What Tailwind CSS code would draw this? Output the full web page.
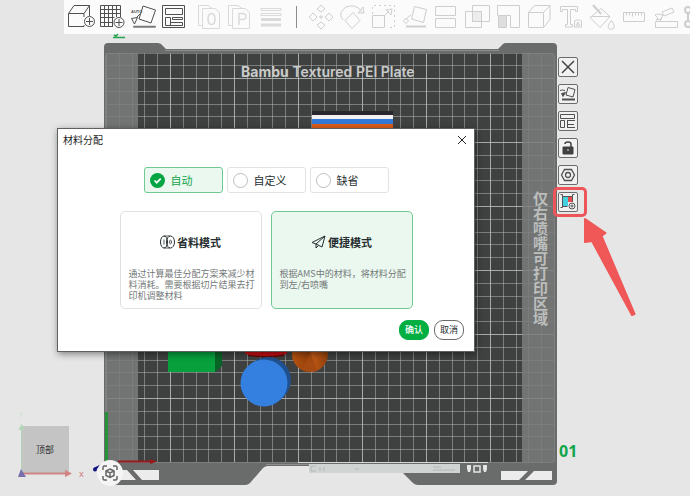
<!DOCTYPE html>
<html lang="zh-CN">
<head>
<meta charset="utf-8">
<meta name="viewport" content="width=device-width, initial-scale=1">
<title>材料分配</title>
<script src="https://cdn.jsdelivr.net/npm/@tailwindcss/browser@4"></script>
</head>
<body class="bg-[#e6e6e6] font-['Noto_Sans_CJK_SC',sans-serif] text-[#262e30]">
<main class="relative min-h-screen overflow-hidden">

  <!-- Build plate and models -->
  <svg class="absolute left-0 top-0" width="690" height="496" viewBox="0 0 690 496" role="img" aria-label="打印板">
    <defs>
      <pattern id="grid" x="106" y="78" width="64" height="64" patternUnits="userSpaceOnUse">
        <path d="M0 13.500H64M0 26.500H64M0 38.500H64M0 51.500H64M13.500 0V64M26.500 0V64M38.500 0V64M51.500 0V64" stroke="#b5bab8" stroke-opacity=".5"/>
        <path d="M0 .5H64M.5 0V64" stroke="#c8cdcb" stroke-opacity=".75"/>
      </pattern>
      <linearGradient id="cone"><stop offset="0" stop-color="#b9520f"/><stop offset=".5" stop-color="#8f3f0c"/><stop offset=".55" stop-color="#c35a16"/><stop offset="1" stop-color="#8e3e0b"/></linearGradient>
    </defs>
    <path d="M104 47q0-4 4-4h50q3 0 5 3l3 3h332l5-5q1-1 3-1h47q4 0 4 4v434q0 4-4 4H418q-3 0-5-2l-10-10H309v-7h-41q-3 0-5 2l-13 15q-2 2-5 2H108q-4 0-4-4z" fill="#6a6c6b"/>
    <path d="M165 50.500H499" stroke="#8b908e"/>
    <path d="M106 53h32v409h-32zM522 53h32v409h-32z" fill="#727473"/>
    <rect x="138" y="53" width="384" height="409" fill="#3f4140"/>
    <rect x="138" y="53" width="384" height="409" fill="url(#grid)"/>
    <g opacity=".25"><rect x="106" y="53" width="32" height="409" fill="url(#grid)"/><rect x="522" y="53" width="32" height="409" fill="url(#grid)"/></g>
    <rect x="105.500" y="53.500" width="449" height="409" rx="3" fill="none" stroke="#858886" stroke-opacity=".7"/>
    <path d="M266 464.500H404" stroke="#8c8f8d"/>
    <path d="M298 462.500H488" stroke="#d4d8d6"/>
    <rect x="309" y="464" width="151" height="9" fill="#d0d5d3"/>
    <path d="M316 466h-5v5h5M320 467v4M324 467v4M355 469h4M433 467h8M433 470h22" stroke="#b4bab7" fill="none"/>
    <path d="M467 465h4v4l-1 3h-2l-1-3zM483 465h4v4l-1 3h-2l-1-3z" fill="#e4e6e5"/>
    <rect x="474" y="466" width="6" height="6" fill="none" stroke="#e4e6e5" stroke-width="1.500"/>
    <path d="M119 470h8l9 10h-17zM133 470h26v10h-17zM501 471h27l-9 9h-18zM534 471h18v9h-27z" fill="#ececec"/>
    <text x="241" y="77" font-family="Inter, sans-serif" font-size="14" font-weight="600" fill="#c9cbca"><tspan font-weight="700">Bambu</tspan> Textured PEI Plate</text>

    <path d="M312 111h81v5h-81z" fill="#29262d"/><path d="M312 115h81v5h-81z" fill="#f0f0f3"/>
    <path d="M312 119h81v5h-81z" fill="#3278d8"/><path d="M312 124h81v6h-81z" fill="#dc5c1a"/>
    <path d="M215 345h7v21l-7 6z" fill="#076426"/><path d="M168 345h47v27h-47z" fill="#07a03d"/>
    <path d="M248 354q18 3 36 0v2q-18 3-36 0z" fill="#650a0d"/><path d="M245 345h42v9q-21 4-42 0z" fill="#c90d12"/>
    <circle cx="268" cy="380" r="23" fill="#20518f"/><circle cx="264" cy="383" r="23.500" fill="#3480e0"/>
    <circle cx="310" cy="354" r="18" fill="url(#cone)"/><path d="M310 352l-8 18q8 3 15 0z" fill="#a54a10"/>

    <path d="M106.500 412V462" stroke="#28923a" stroke-width="3"/>
    <path d="M118 461.500H152" stroke="#96191c" stroke-width="2"/><path d="M150 459l7 2.500-7 2.500z" fill="#96191c"/>
    <path d="M94 469l8-4" stroke="#11117f" stroke-width="2"/><circle cx="95" cy="469.500" r="2" fill="#11117f"/>

    <rect x="21" y="426" width="48" height="47" fill="#c4c4c4"/>
    <path d="M21.500 428V473" stroke="#b5d2ba"/><path d="M18.500 430l3-6 3 6z" fill="#b0d8b8"/>
    <path d="M19 412l2 3 2-3M21 415v3" stroke="#cfe3d2" fill="none"/>
    <path d="M22 473.500H66" stroke="#cf8583" stroke-width="2"/><path d="M65 470l7 3.500-7 3.500z" fill="#d18481"/>
    <path d="M18 477l3-8 5 8z" fill="#766fad"/>
  </svg>
  <span class="absolute left-9 top-[443px] text-[9px] leading-[14px] text-[#333]">顶部</span>
  <span class="absolute left-[79px] top-[468px] font-['Noto_Sans',sans-serif] text-[9px] leading-[12px] text-[#cf7b79]">x</span>
  <span class="absolute left-[532px] top-[191px] font-bold text-[15px] leading-[16px] text-[#bcbebd] [writing-mode:vertical-rl]">仅右喷嘴可打印区域</span>
  <span class="absolute left-[559px] top-[440px] font-['Noto_Sans',sans-serif] text-base leading-[22px] font-bold text-[#12a54a]">01</span>
  <button type="button" aria-label="适应视图" class="absolute left-[97px] top-[460px] size-[26px] rounded-full bg-[#f5f5f5]">
    <svg class="size-full" viewBox="0 0 26 26" fill="none" stroke="#666" stroke-width="1.500"><path d="M6 10V7l1-1h3M16 6h3l1 1v3M20 16v3l-1 1h-3M10 20H7l-1-1v-3M13 9l4 2v4.500l-4 2-4-2V11zM9 11l4 2 4-2M13 13v4"/></svg>
  </button>

  <!-- Toolbar -->
  <header class="relative ml-16 flex h-[34px] overflow-hidden bg-[#fbfbfb] pl-0.5 [&_button]:w-[31px] [&_button]:shrink-0 [&_svg]:h-[34px] [&_svg]:w-[31px]">
    <div class="flex shrink-0 text-[#505050]">
      <button type="button" aria-label="添加模型"><svg viewBox="66 0 31 34" fill="none" stroke="currentColor"><path d="M84 17V13.500H68.500v13H84V25M68.500 13.500L74 5.500h15.500V16M84 13.500l5.500-8"/><circle cx="89.500" cy="21.500" r="5"/><path d="M86 21.500h7M89.500 18v7"/></svg></button>
      <button type="button" aria-label="添加打印板"><svg viewBox="97 0 31 34" fill="none" stroke="currentColor"><path d="M113 26.500h-12.500v-21h20V17M104.500 5.500v21M108.500 5.500v21M112.500 5.500v21M116.500 5.500V17M100.500 9.500h20M100.500 13.500h20M100.500 17.500h14M100.500 22.500H113"/><circle cx="119" cy="22.500" r="5"/><path d="M115.500 22.500h7M119 19v7"/></svg></button>
      <button type="button" aria-label="自动朝向"><svg viewBox="128 0 31 34" fill="none" stroke="currentColor"><text x="131" y="13" font-family="Liberation Sans" font-size="4" font-weight="700" fill="currentColor" stroke="none">AUTO</text><path d="M143 6l12.500 4-4.500 13-12-4zM131.500 18.500l6-1-3 6.500z"/><path d="M140 14l-4 4"/><path d="M134 26.800h21" stroke-width="2" stroke-linecap="round" opacity=".75"/></svg></button>
      <button type="button" aria-label="自动摆放"><svg viewBox="159 0 31 34" fill="none" stroke="currentColor"><path d="M162.500 5.500h22v22h-22zM165.500 8.500h17v6h-17zM165.500 17.500h5v8h-5zM172.500 17.500h10v2h-10zM170.500 22.500h12v3h-12z"/></svg></button>
    </div>
    <div class="ml-[5px] flex shrink-0 text-[#dadada]">
      <button type="button" aria-label="拆分到对象" disabled><svg viewBox="195 0 31 34" fill="none" stroke="currentColor"><path d="M203 25.500h-4.500v-20H208l4 3M202.500 8.500H215l4.500 4v16h-17z"/><path d="M208 19q0-5.500 3.500-5.500T215 19t-3.500 5.500T208 19" stroke-width="1.500"/></svg></button>
      <button type="button" aria-label="拆分到零件" disabled><svg viewBox="226 0 31 34" fill="none" stroke="currentColor"><path d="M233 25.500h-4.500v-20H238l4 3M232.500 8.500H245l4.500 4v16h-17z"/><path d="M239 25V13.500h3q4 0 4 3t-4 3h-3" stroke-width="1.500"/></svg></button>
      <button type="button" aria-label="可变层高" disabled><svg viewBox="257 0 31 34" fill="none" stroke="currentColor"><path d="M261 8.500h20v2h-20zM261 13.500h20v2h-20z"/><path d="M261 19.500h20M261 25h20" stroke-width="3"/></svg></button>
    </div>
    <div class="mt-1.5 ml-2 h-[22px] w-px shrink-0 bg-[#8c8c8c]"></div>
    <div class="ml-[9px] flex shrink-0 text-[#cecece]">
      <button type="button" aria-label="移动" disabled><svg viewBox="307 0 31 34" fill="none" stroke="currentColor"><path d="M322 5l4 4-4 3-4-3zM322 22l4 3-4 4-4-4zM310 17l4-4 4 4-4 4zM326 17l4-4 4 4-4 4zM322 15v4M320 17h4"/></svg></button>
      <button type="button" aria-label="旋转" disabled><svg viewBox="338 0 31 34" fill="none" stroke="currentColor"><path d="M354 12.500l7 8-8 8-7-8zM344 20q-4-5-1-9 4-6 12-5 5 1 8 6M359 13h6l-1-6z"/></svg></button>
      <button type="button" aria-label="缩放" disabled><svg viewBox="369 0 31 34" fill="none" stroke="currentColor"><path stroke-dasharray="2 3" d="M373.500 14V5.500h22v22H388"/><path d="M373.500 15.500h12v12h-12zM385 16l5-5M387 10l6-1-1 6z"/></svg></button>
      <button type="button" aria-label="放置在面上" disabled><svg viewBox="400 0 31 34" fill="none" stroke="currentColor"><path d="M415.500 6.500l12 3-3 13-12-3.500zM407 18l2.500 3-2.500 2.500-2.500-2.500zM412 15l-4 3"/><path d="M407 26.500h20" stroke-width="2"/></svg></button>
      <button type="button" aria-label="切割" disabled><svg viewBox="431 0 31 34" fill="none" stroke="currentColor"><path d="M436.500 15.500v-9h20v9zM436.500 18.500h20v9h-20z"/></svg></button>
      <button type="button" aria-label="布尔运算" disabled><svg viewBox="462 0 31 34" fill="none" stroke="currentColor"><path fill="#ededed" d="M473.500 11.500h9v10h-9z"/><path d="M473.500 5.500h17v16h-17zM466.500 11.500h16v16h-16z"/></svg></button>
      <button type="button" aria-label="支撑绘制" disabled><svg viewBox="493 0 31 34" fill="none" stroke="currentColor"><path fill="#dedede" d="M499.500 15.500h8v12h-8z"/><path d="M498.500 15v-9.500h22v22h-9v-12h-13"/></svg></button>
      <button type="button" aria-label="接缝绘制" disabled><svg viewBox="524 0 31 34" fill="none" stroke="currentColor"><path d="M529.500 12.500h15v15h-15zM529.500 12.500l6-7h15.500l-6.500 7M551 5.500v14l-6.500 8"/></svg></button>
      <button type="button" aria-label="文字" disabled><svg viewBox="555 0 31 34" fill="none" stroke="currentColor"><path d="M561.500 6.500h17v5h-2v-2h-5v15h2v2.500h-7v-2.500h2v-15h-5v2h-2zM575.500 27v-6l2-1h3l2 1v6zM577 26l2-4 2 4M578 25h2"/></svg></button>
      <button type="button" aria-label="颜色绘制" disabled><svg viewBox="586 0 31 34" fill="none" stroke="currentColor"><path d="M602 8.500l9 8-10 11-10-10zM592 16.500h19"/><path d="M594 5l8 9" stroke-width="2"/><path d="M612.500 20.500q4 6 2 8t-4.500 0 2.500-8z"/></svg></button>
      <button type="button" aria-label="测量" disabled><svg viewBox="617 0 31 34" fill="none" stroke="currentColor"><path d="M624.500 12.500h21v9h-21zM627.500 12.500v3M630.500 12.500v3M633.500 12.500v4M636.500 12.500v3M639.500 12.500v3M642.500 12.500v3"/></svg></button>
      <button type="button" aria-label="装配" disabled><svg viewBox="648 0 31 34" fill="none" stroke="currentColor"><path d="M656.500 21.500h22v6h-22zM663 12l10-4 2 4-10 4zM656 15l3 3-2 2 5-1 2-4-6-1zM661 21l2-3"/></svg></button>
      <button type="button" aria-label="装配视图" disabled><svg viewBox="679 0 31 34" fill="none" stroke="currentColor" stroke-width="2"><circle cx="689" cy="10" r="3"/><circle cx="689" cy="24" r="3"/><path d="M689 13v8"/></svg></button>
    </div>
  </header>
  <svg class="absolute left-[113px] top-[33px]" width="13" height="6" fill="none" stroke="#28a552"><path d="M1 2l2 1 2-2M0 4.500h12" stroke-width="1.500"/></svg>

  <!-- Plate actions -->
  <nav aria-label="打印板操作" class="absolute left-[558px] top-[57px] flex flex-col gap-[7px] [&_button]:size-5 [&_button]:rounded-[2px] [&_button]:border [&_button]:border-[#6b6b6b] [&_button]:bg-[#f1f1f1] [&_svg]:size-[18px]">
    <button type="button" aria-label="删除"><svg viewBox="0 0 18 18" fill="none" stroke="#444" stroke-width="1.500"><path d="M3 3l12 12M15 3L3 15"/></svg></button>
    <button type="button" aria-label="自动朝向"><svg viewBox="0 0 18 18" fill="none" stroke="#505050"><path d="M9 2.500l7 2-2 7.500-7-2zM1 5.500q2-1 5 0"/><path d="M2.500 8.500l4-1-2.500 4z" fill="#505050"/><path d="M3 14.500h13" stroke-width="2"/></svg></button>
    <button type="button" aria-label="自动摆放"><svg viewBox="0 0 18 18" fill="none" stroke="#505050"><path d="M1.500 2.500h14v4h-14zM1.500 8.500h4v7h-4zM8 8.500h8M8.500 8.500v7M9 12.500h6M8 15.500h8"/></svg></button>
    <button type="button" aria-label="锁定"><svg viewBox="0 0 18 18" fill="none" stroke="#404040"><path d="M4 8h10v7H4z" fill="#404040"/><path d="M12 8V5q0-2-3-2T6 5" stroke-width="1.500"/><path d="M8 11h2" stroke="#ddd"/></svg></button>
    <button type="button" aria-label="打印板设置"><svg viewBox="0 0 18 18" fill="none" stroke="#505050" stroke-width="1.300"><path d="M5.500 3.500h7l3 5.500-3 5.500h-7L2.500 9z"/><circle cx="9" cy="9" r="2.500"/></svg></button>
    <button type="button" aria-label="材料分配"><svg viewBox="0 0 18 18" fill="none" stroke="#555"><path d="M4 4h5v9H4z" fill="#42d2df" stroke="none"/><path d="M9 4h5v5H9z" fill="#e64b4e" stroke="none"/><path d="M1.500 1.500h2v13h-2M3.500 3.500h10M15.500 1.500h-2v7M3.500 13.500h5"/><circle cx="13" cy="13" r="3" fill="#eee"/><circle cx="13" cy="13" r="1"/></svg></button>
  </nav>
  <div class="absolute left-[553px] top-[187px] h-[30px] w-[34px] rounded-[5px] border-[3px] border-[#ec555a]"></div>
  <svg class="absolute left-[580px] top-[214px]" width="58" height="104" viewBox="580 214 58 104"><path d="M585 219l20.500 14-4 3 33 78-2.500 1L592 241l-7 1z" fill="#f05757" stroke="#f05757" stroke-width="2" stroke-linejoin="round"/></svg>

  <!-- Filament assignment dialog -->
  <section role="dialog" aria-labelledby="dlg-title" class="absolute left-[57px] top-32 flex w-[418px] flex-col border border-[#606060] bg-white pb-[11px] shadow-[1px_2px_7px_rgba(0,0,0,0.45)]">
    <div class="flex h-[22px] items-center justify-between pr-2 pl-[5px]">
      <h1 id="dlg-title" class="text-[10px] leading-[14px] text-[#222]">材料分配</h1>
      <button type="button" aria-label="关闭"><svg class="size-2" viewBox="0 0 8 8" stroke="#222"><path d="M0 0l8 8M8 0L0 8"/></svg></button>
    </div>
    <fieldset class="mt-4 flex justify-center gap-1 [&_label]:flex [&_label]:h-[26px] [&_label]:w-[79px] [&_label]:items-center [&_label]:gap-[6px] [&_label]:rounded-[3px] [&_label]:border [&_label]:pl-[5px] [&_label]:text-[11px] [&_label]:leading-[16px]">
      <label class="border-[#6fca92] bg-[#ebf8f0] text-[#12a54a]">
        <span class="grid">
          <input type="radio" name="assign" checked class="col-start-1 row-start-1 size-[15px] appearance-none rounded-full bg-[#05a545]">
          <svg class="pointer-events-none col-start-1 row-start-1 size-[15px]" viewBox="0 0 15 15" fill="none" stroke="#fff" stroke-width="1.700"><path d="M4.500 7.500l2.200 2.200 4-4"/></svg>
        </span>自动</label>
      <label class="border-[#e2e2e2]"><input type="radio" name="assign" class="size-[15px] appearance-none rounded-full border border-[#bdbdbd]">自定义</label>
      <label class="border-[#e2e2e2]"><input type="radio" name="assign" class="size-[15px] appearance-none rounded-full border border-[#bdbdbd]">缺省</label>
    </fieldset>
    <div class="mt-[18px] flex justify-center gap-[9px] [&>button]:flex [&>button]:h-[98px] [&>button]:w-[142px] [&>button]:flex-col [&>button]:rounded-[5px] [&>button]:border [&>button]:pt-[22px] [&>button]:text-left">
      <button type="button" aria-pressed="false" class="border-[#dfe1e1]">
        <span class="flex h-4 items-center gap-0.5 self-center text-[11px] leading-[16px] font-bold"><svg class="h-[14px] w-[15px]" viewBox="0 0 15 14" fill="none" stroke="#262e30"><ellipse cx="4" cy="7" rx="3.500" ry="6"/><ellipse cx="10.500" cy="7" rx="4" ry="6"/><ellipse cx="10.500" cy="7" rx="1" ry="1.800" stroke-width=".8"/><path d="M4 1h6M4 13h6M4 4.500v5" stroke-width=".8"/></svg>省料模式</span>
        <span class="mt-[18px] pr-1 pl-2 text-[9px] leading-[11px] text-[#747979]">通过计算最佳分配方案来减少材料消耗。需要根据切片结果去打印机调整材料</span>
      </button>
      <button type="button" aria-pressed="true" class="border-[#6fca92] bg-[#ebf8f0]">
        <span class="flex h-4 items-center gap-0.5 self-center text-[11px] leading-[16px] font-bold"><svg class="h-[14px] w-[15px]" viewBox="0 0 15 14" fill="none" stroke="#262e30" stroke-linejoin="round"><path d="M14 1L1 7.500l4 1.500 6 3zM14 1L5 9v4l2.500-2.500"/></svg>便捷模式</span>
        <span class="mt-[18px] pr-1 pl-2 text-[9px] leading-[11px] text-[#747979]">根据AMS中的材料，将材料分配到左/右喷嘴</span>
      </button>
    </div>
    <div class="mt-[11px] flex justify-end gap-[5px] pr-[10px] [&>button]:h-5 [&>button]:w-[30px] [&>button]:rounded-[9px] [&>button]:border [&>button]:text-[9px] [&>button]:leading-[14px]">
      <button type="button" class="border-[#00ae42] bg-[#00ae42] font-medium text-white">确认</button>
      <button type="button" class="border-[#6b6b6b] bg-white text-[#262e30]">取消</button>
    </div>
  </section>
</main>
</body>
</html>
